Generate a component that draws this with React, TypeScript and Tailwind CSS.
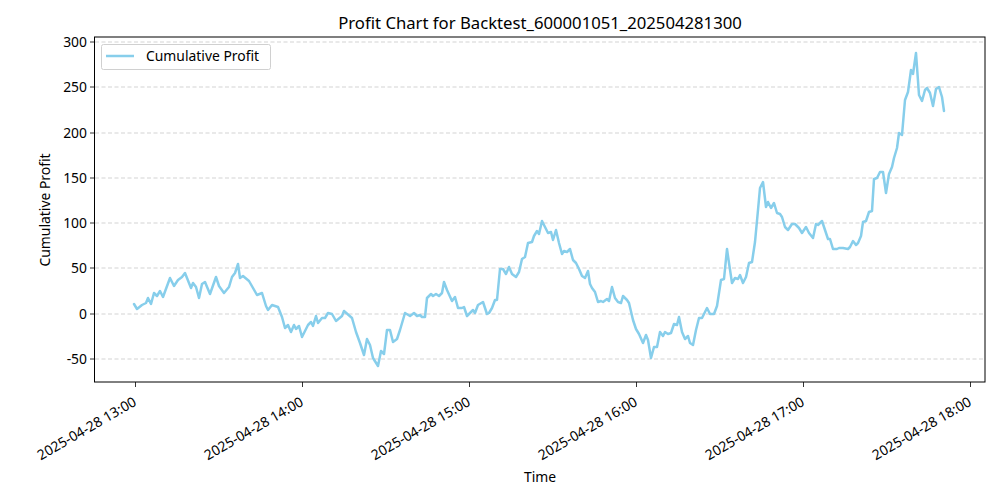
const pts: [number, number][] = [
[134,304],[137,309],[142,305],[146,303],[148,298],[151,304],[154,293],[157,296],[160,291],[163,297],[170,278],[174,286],[178,280],[182,277],[185,273],[191,288],[193,283],[196,287],[199,298],[202,284],[205,282],[210,294],[216,277],[219,286],[224,293],[229,287],[232,277],[235,273],[238,264],[240,278],[243,276],[249,281],[257,295],[262,293],[266,306],[268,310],[272,305],[278,307],[282,317],[285,328],[288,325],[291,332],[294,325],[296,329],[299,326],[302,337],[308,325],[311,322],[313,326],[316,316],[318,323],[322,318],[325,318],[328,313],[332,314],[336,321],[342,316],[344,311],[352,318],[356,332],[360,343],[364,355],[367,339],[370,345],[373,358],[378,366],[381,351],[384,354],[387,330],[390,330],[393,342],[397,339],[400,330],[405,313],[410,316],[414,313],[417,316],[420,315],[422,317],[425,317],[427,298],[431,294],[433,296],[436,294],[439,296],[442,293],[444,282],[447,290],[452,301],[455,297],[458,308],[462,308],[464,307],[467,316],[473,310],[475,313],[478,305],[483,302],[487,314],[489,313],[492,308],[495,300],[497,300],[500,269],[503,269],[506,274],[509,267],[512,274],[516,277],[519,272],[522,259],[525,257],[528,243],[532,242],[534,236],[537,231],[539,234],[542,221],[545,227],[548,233],[551,232],[553,240],[556,230],[559,243],[562,254],[564,251],[567,252],[570,249],[573,260],[576,263],[579,269],[582,276],[585,278],[588,271],[590,284],[592,288],[595,292],[598,302],[601,301],[603,302],[607,299],[609,301],[612,287],[615,298],[618,302],[621,303],[623,296],[627,300],[629,303],[633,320],[636,329],[639,334],[643,343],[646,335],[648,340],[651,358],[654,347],[657,347],[660,332],[663,336],[665,332],[668,334],[671,333],[674,324],[677,325],[679,317],[682,332],[685,339],[688,336],[690,343],[693,345],[696,330],[699,318],[702,318],[707,308],[710,314],[714,314],[717,306],[721,280],[724,279],[727,249],[729,263],[732,283],[735,278],[738,279],[740,275],[743,283],[746,277],[749,263],[752,262],[755,242],[758,210],[760,188],[763,182],[766,207],[768,202],[771,208],[774,203],[777,213],[780,214],[782,217],[785,227],[788,230],[792,224],[795,224],[799,228],[802,233],[806,227],[809,233],[813,238],[816,224],[818,225],[822,221],[824,227],[828,239],[830,239],[833,249],[837,249],[839,248],[843,248],[848,249],[850,247],[853,241],[856,245],[858,243],[861,236],[863,222],[866,221],[869,212],[872,211],[874,179],[877,178],[880,172],[883,172],[886,193],[889,174],[892,167],[894,158],[897,148],[899,133],[902,135],[905,100],[908,92],[911,70],[913,74],[916,53],[919,95],[922,101],[925,90],[927,88],[930,93],[933,106],[936,89],[939,87],[942,97],[944,111]];

const yTicks: [number, string][] = [[42,"300"],[87,"250"],[133,"200"],[178,"150"],[223,"100"],[268,"50"],[314,"0"],[359,"-50"]];
const xTicks: [number, string][] = [[135.5,"2025-04-28 13:00"],[302.5,"2025-04-28 14:00"],[469.5,"2025-04-28 15:00"],[636.5,"2025-04-28 16:00"],[803.5,"2025-04-28 17:00"],[970.5,"2025-04-28 18:00"]];

export default function App() {
  return (
    <div className="w-[1000px] h-[500px] bg-white font-['DejaVu_Sans','Liberation_Sans',sans-serif]">
      <svg width="1000" height="500" viewBox="0 0 1000 500">
        <text x="540" y="29" textAnchor="middle" fontSize="16.7" fill="#000">Profit Chart for Backtest_600001051_202504281300</text>
        {yTicks.map(([y, l]) => (
          <g key={l}>
            <line x1="95" x2="985" y1={y} y2={y} stroke="#b0b0b0" strokeOpacity="0.7" strokeDasharray="4,2.5" strokeWidth="0.8" />
            <line x1="90" x2="94.5" y1={y} y2={y} stroke="#000" strokeWidth="0.8" />
            <text x="87" y={y + 5} textAnchor="end" fontSize="13.9" fill="#000">{l}</text>
          </g>
        ))}
        {xTicks.map(([x, l]) => (
          <g key={l}>
            <line x1={x} x2={x} y1="382" y2="387" stroke="#000" strokeWidth="0.8" />
            <text x={x - 3} y="396" textAnchor="end" fontSize="13.9" fill="#000" transform={`rotate(-30 ${x - 3} 396)`} dy="10">{l}</text>
          </g>
        ))}
        <polyline points={pts.map(p => p.join(",")).join(" ")} fill="none" stroke="#87ceeb" strokeWidth="2.5" strokeLinejoin="round" strokeLinecap="round" />
        <rect x="94.5" y="37" width="890.5" height="345" fill="none" stroke="#000" strokeWidth="1" />
        <rect x="101.5" y="44.5" width="169" height="25" rx="2" fill="#fff" fillOpacity="0.8" stroke="#d0d0d0" strokeWidth="1" />
        <line x1="106" x2="134" y1="56" y2="56" stroke="#87ceeb" strokeWidth="2.5" />
        <text x="146" y="61" fontSize="13.9" fill="#000">Cumulative Profit</text>
        <text x="540" y="482" textAnchor="middle" fontSize="13.9" fill="#000">Time</text>
        <text x="50" y="210" textAnchor="middle" fontSize="13.9" fill="#000" transform="rotate(-90 50 210)">Cumulative Profit</text>
      </svg>
    </div>
  );
}
